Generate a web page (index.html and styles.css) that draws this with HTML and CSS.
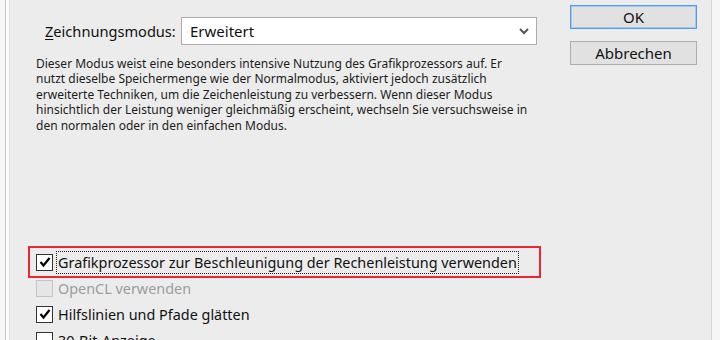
FILE: index.html
```html
<!DOCTYPE html>
<html lang="de">
<head>
<meta charset="utf-8">
<title>Leistung</title>
<link rel="stylesheet" href="styles.css">
</head>
<body>
<div class="window">
  <div class="panel">
    <div class="main">
      <div class="mode-row">
        <span class="mode-label"><u>Z</u>eichnungsmodus:</span>
        <div class="select">
          <span class="select-value">Erweitert</span>
          <svg class="chevron" width="10" height="7" viewBox="0 0 10 7"><polyline points="1,1 5,5 9,1" fill="none" stroke="#555" stroke-width="2"/></svg>
        </div>
      </div>
      <p class="desc">Dieser Modus weist eine besonders intensive Nutzung des Grafikprozessors auf. Er<br>nutzt dieselbe Speichermenge wie der Normalmodus, aktiviert jedoch zusätzlich<br>erweiterte Techniken, um die Zeichenleistung zu verbessern. Wenn dieser Modus<br>hinsichtlich der Leistung weniger gleichmäßig erscheint, wechseln Sie versuchsweise in<br>den normalen oder in den einfachen Modus.</p>
      <div class="options">
        <div class="opt highlight">
          <span class="box checked"><svg width="14" height="14" viewBox="0 0 14 14"><polyline points="2.5,7 5.5,10.5 11.5,3" fill="none" stroke="#000" stroke-width="2.2"/></svg></span>
          <span class="opt-label focus">Grafikprozessor zur Beschleunigung der Rechenleistung verwenden</span>
        </div>
        <div class="opt disabled">
          <span class="box"></span>
          <span class="opt-label">OpenCL verwenden</span>
        </div>
        <div class="opt">
          <span class="box checked"><svg width="14" height="14" viewBox="0 0 14 14"><polyline points="2.5,7 5.5,10.5 11.5,3" fill="none" stroke="#000" stroke-width="2.2"/></svg></span>
          <span class="opt-label">Hilfslinien und Pfade glätten</span>
        </div>
        <div class="opt">
          <span class="box"></span>
          <span class="opt-label">30-Bit-Anzeige</span>
        </div>
      </div>
    </div>
    <div class="buttons">
      <button class="btn default">OK</button>
      <button class="btn">Abbrechen</button>
    </div>
  </div>
</div>
</body>
</html>
```
FILE: styles.css
```css
html, body {
  margin: 0;
  padding: 0;
  height: 340px;
  overflow: hidden;
}
body {
  background: #f6f6f6;
  font-family: "Noto Sans", "Open Sans", sans-serif;
  color: #141414;
}
.window {
  margin: 0 8px 0 5px;
  padding-left: 3px;
  height: 340px;
  background: #fbfbfb;
  border-left: 1px solid #c9c9c9;
  border-right: 1px solid #d6d6d6;
}
.panel {
  height: 340px;
  background: #ececec;
  border-left: 1px solid #dedede;
  display: flex;
}
.main {
  width: 534px;
  padding: 17px 0 0 26px;
  display: flex;
  flex-direction: column;
}
.mode-row {
  display: flex;
  align-items: center;
  padding-left: 9px;
}
.mode-label {
  width: 136px;
  font-size: 14.6px;
  color: #111;
}
.mode-label u {
  text-decoration-thickness: 1px;
  text-underline-offset: 2px;
}
.select {
  box-sizing: border-box;
  width: 356px;
  height: 28px;
  background: #fff;
  border: 1px solid #acacac;
  display: flex;
  align-items: center;
  justify-content: space-between;
  padding: 0 7px 0 8px;
}
.select-value {
  font-size: 15px;
  color: #111;
}
.chevron {
  margin-top: 1px;
}
.desc {
  margin: 11px 0 0 0;
  font-size: 12px;
  line-height: 15.4px;
  color: #1c1c1c;
}
.options {
  margin-top: 116px;
  display: flex;
  flex-direction: column;
}
.opt {
  height: 26px;
  display: flex;
  align-items: center;
  position: relative;
}
.opt.highlight::after {
  content: "";
  position: absolute;
  left: -8px;
  top: -3px;
  width: 509px;
  height: 28px;
  border: 2px solid #ea2732;
}
.box {
  box-sizing: border-box;
  width: 17px;
  height: 17px;
  border: 1px solid #333;
  background: #fff;
  display: flex;
  align-items: center;
  justify-content: center;
  margin-right: 4px;
}
.opt-label {
  font-size: 14.4px;
  color: #111;
  padding: 0 1px;
  line-height: 21px;
}
.opt-label.focus {
  outline: 1px dotted #222;
}
.opt.disabled .box {
  border-color: #c4c4c4;
  background: #e6e6e6;
}
.opt.disabled .opt-label {
  color: #9c9c9c;
}
.buttons {
  padding-top: 5px;
  display: flex;
  flex-direction: column;
  gap: 12px;
}
.btn {
  box-sizing: border-box;
  width: 127px;
  height: 24px;
  font-family: "Noto Sans", "Open Sans", sans-serif;
  font-size: 15px;
  color: #111;
  background: #e1e1e1;
  border: 1px solid #adadad;
  padding: 0;
  line-height: 20px;
}
.btn.default {
  border-color: #4e9de9;
  box-shadow: inset 0 0 0 1px #9fcbf4;
}
```
